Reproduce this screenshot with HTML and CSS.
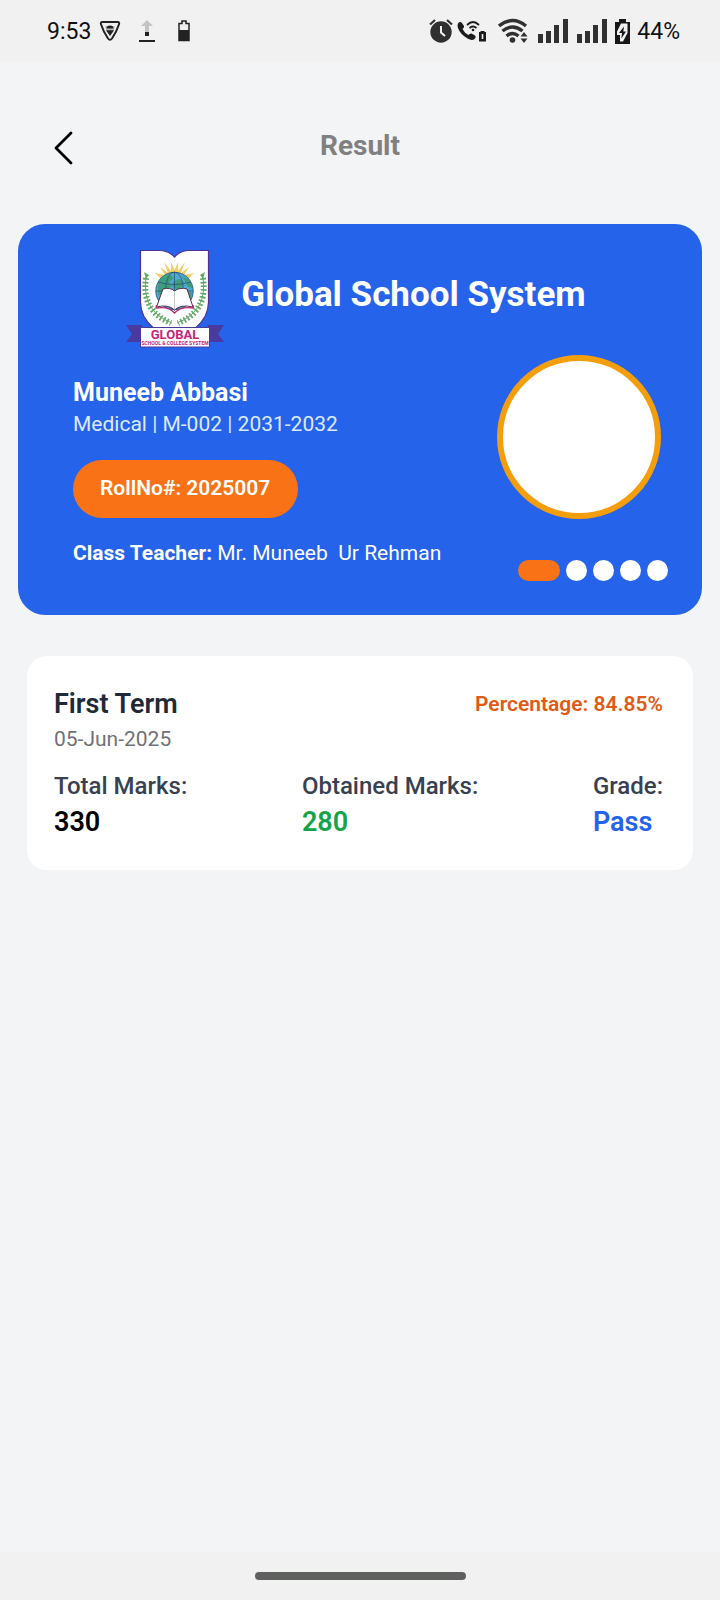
FILE: index.html
```
<!DOCTYPE html>
<html lang="en">
<head>
    <meta charset="UTF-8">
    <meta name="viewport" content="width=device-width, initial-scale=1.0">
    <title>Result - Global School System</title>
    <link rel="stylesheet" href="styles.css">
</head>
<body>
    <div class="status-bar">
        <div class="status-left">
            <span class="clock">9:53</span>
            <svg class="icon-shield" width="22" height="22" viewBox="0 0 22 22">
                <path d="M3.500 2h15q2.300 0 1.500 2.200Q17.500 12 13 18.500q-2 2.500-4 0Q4.500 12 2 4.200 1.200 2 3.500 2z" fill="none" stroke="#222" stroke-width="2"/>
                <path d="M6 6h10l-1.500 5-3.500 5-3.500-5z" fill="#bbb"/>
                <path d="M7.500 8.500q0-3 3.500-3t3.500 3zM7 10.300h8L11 16z" fill="#222"/>
            </svg>
            <svg class="icon-upload" width="18" height="22" viewBox="0 0 18 22">
                <path d="M9 0l6 6h-4v6H7V6H3z" fill="#c4c4c4"/>
                <path d="M7 12h4v4H7zM1 20h16v2H1z" fill="#222"/>
            </svg>
            <svg class="icon-battery" width="12" height="22" viewBox="0 0 12 22">
                <path d="M1 3.500h3V1h4v2.500h3V20.500H1z" fill="none" stroke="#222" stroke-width="1.500"/>
                <path d="M1 10h10v11H1z" fill="#222"/>
            </svg>
        </div>
        <div class="status-right">
            <svg width="24" height="24" viewBox="0 0 24 24">
                <circle cx="12" cy="13" r="10.700" fill="#303030"/>
                <path d="M1 5.500L6 1M23 5.500L18 1" stroke="#303030" stroke-width="2.200"/>
                <path d="M12 7v6.500l4 3.500" fill="none" stroke="#f1f1f1" stroke-width="2"/>
            </svg>
            <svg class="icon-call" width="30" height="22" viewBox="0 0 30 22">
                <path d="M1 3.500Q3 1 5 3l2 3q.6 1.500-1.500 3 2 4 6 6 1.500-2 3-1.500l3.500 2q1.500 1.500-.5 3.500-2.500 2-7-.5Q3 14 .8 7.500.2 5 1 3.500z" fill="#1c1c1c"/>
                <path d="M10 5q6-6 12 0M12.500 8q3.500-3 7 0" fill="none" stroke="#1c1c1c" stroke-width="1.800"/>
                <circle cx="16" cy="10" r="1.300" fill="#1c1c1c"/>
                <path d="M22 12h1.500v-1h4v1H29v9.500h-7z" fill="#1c1c1c"/>
                <path d="M25.500 14v5" stroke="#eee" stroke-width="1.600"/>
            </svg>
            <svg class="icon-wifi" width="31" height="26" viewBox="0 0 31 26">
                <path d="M1 8q13.500-11 27 0M4.500 13q10-8 20 0M8.500 18q6-5 12 0" fill="none" stroke="#303030" stroke-width="3.400"/>
                <circle cx="14.500" cy="22" r="2.800" fill="#303030"/>
                <path d="M20 19.500L26 12l6 8-6 7z" fill="#f1f1f1"/>
                <path d="M22.500 18.500L26 14l3.500 4.500zM22.500 20.500h7L26 25z" fill="#303030"/>
            </svg>
            <svg class="icon-signal" width="30" height="24" viewBox="0 0 30 24">
                <path d="M0 15h5v9H0zM8 12h5v12H8zM16 6h5v18h-5zM25 0h5v24h-5z" fill="#303030"/>
            </svg>
            <svg class="icon-signal" width="30" height="24" viewBox="0 0 30 24">
                <path d="M0 15h5v9H0zM8 12h5v12H8zM16 6h5v18h-5zM25 0h5v24h-5z" fill="#303030"/>
            </svg>
            <svg class="icon-charging" width="15" height="25" viewBox="0 0 15 25">
                <path d="M0 3h4V0h7v3h4v22H0z" fill="#181818"/>
                <path d="M6 4.500h6.500V14L8 22.500H5V16H2v-3.500z" fill="#f1f1f1"/>
                <path d="M9 7.500L4 14h3l-.6 5.500L11 12.500H8.300z" fill="#181818"/>
            </svg>
            <span class="percent">44%</span>
        </div>
    </div>

    <header class="top-bar">
        <button class="back-btn" type="button" aria-label="Back">
            <svg width="20" height="34" viewBox="0 0 20 34">
                <path d="M17 2L2 17l15 15" fill="none" stroke="#000" stroke-width="2.800" stroke-linecap="round" stroke-linejoin="round"/>
            </svg>
        </button>
        <h1>Result</h1>
    </header>

    <main>
        <section class="student-card">
            <div class="school">
                <svg class="school-logo" width="100" height="100" viewBox="10 8 100 100">
                    <!-- shield -->
                    <path d="M25.500 10.500h20Q54 11 59.500 17 65 11 73 10.500h20.500V62q0 15-13 26h-42q-13-11-13-26z" fill="#fff" stroke="#4a3596" stroke-width="1.200"/>
                    <!-- sun rays -->
                    <path d="M40 33l10 2-5-8 8 6-4-11 7 9 0-9 3.500 8L63 22l0 9 7-9-4 11 8-6-5 8 10-2-8 8H48z" fill="#f4cf63"/>
                    <!-- globe -->
                    <circle cx="59.500" cy="51" r="19" fill="#4fa9cf"/>
                    <path d="M43 44q3-7 11-10l5 4-5 4 3 4-6 5-3 7-5-4zM58 42l6-3 5 3-2 5-5 3-5-4zM67 36l7 4 4 8-5-1zM71 50l6 3-2 8-5-3z" fill="#3f9c7c"/>
                    <g fill="none" stroke="#254a73" stroke-width="0.700">
                        <circle cx="59.500" cy="51" r="18.700"/>
                        <ellipse cx="59.500" cy="51" rx="9" ry="19"/>
                        <path d="M59.500 32v24M43 42q16 5 33 0M41 51h37"/>
                    </g>
                    <!-- open book -->
                    <path d="M48 49q7-2 11.500 2 5-4 12.500-2l6 18q-12-3-18.500 3-6-6-18-3z" fill="#fff" stroke="#55304f" stroke-width="1"/>
                    <path d="M41.500 65l-.5 3q13-2 18.500 5 6-7 19-5l-.5-3" fill="none" stroke="#b82c6b" stroke-width="1.300"/>
                    <path d="M59.500 51v19" stroke="#aaa" stroke-width="0.700"/>
                    <!-- laurel -->
                    <g fill="none" stroke="#62a865">
                        <path d="M31 37q-5 34 26 46M88 37q5 34-26 46" stroke-width="1"/>
                        <path d="M31 38q-5 33 25 45M88 38q5 33-25 45" stroke-width="6" stroke-dasharray="1.700 2"/>
                    </g>
                    <path d="M29 32l5 3-3 4zM90 32l-5 3 3 4z" fill="#62a865"/>
                    <!-- ribbon -->
                    <path d="M11 85h16v17H11l6-8zM109 85H93v17h16l-6-8z" fill="#4b3a9e"/>
                    <path d="M25.500 87.500h69V107h-69z" fill="#fff" stroke="#4b3a9e" stroke-width="1"/>
                    <text class="logo-name" x="60" y="99" text-anchor="middle">GLOBAL</text>
                    <text class="logo-sub" x="60" y="105" text-anchor="middle">SCHOOL &amp; COLLEGE SYSTEM</text>
                </svg>
                <h2>Global School System</h2>
            </div>
            <div class="student">
                <div class="student-info">
                    <h3>Muneeb Abbasi</h3>
                    <p class="student-class">Medical | M-002 | 2031-2032</p>
                    <span class="roll-no">RollNo#: 2025007</span>
                    <p class="teacher"><strong>Class Teacher:</strong> Mr. Muneeb&nbsp; Ur Rehman</p>
                </div>
                <div class="student-side">
                    <div class="avatar"></div>
                    <div class="dots">
                        <span class="dot active"></span>
                        <span class="dot"></span>
                        <span class="dot"></span>
                        <span class="dot"></span>
                        <span class="dot"></span>
                    </div>
                </div>
            </div>
        </section>

        <section class="result-card">
            <div class="result-head">
                <h3>First Term</h3>
                <span class="percentage">Percentage: 84.85%</span>
            </div>
            <p class="date">05-Jun-2025</p>
            <dl class="marks">
                <div>
                    <dt>Total Marks:</dt>
                    <dd>330</dd>
                </div>
                <div>
                    <dt>Obtained Marks:</dt>
                    <dd class="green">280</dd>
                </div>
                <div>
                    <dt>Grade:</dt>
                    <dd class="blue">Pass</dd>
                </div>
            </dl>
        </section>
    </main>

    <footer class="nav-bar">
        <div class="nav-handle"></div>
    </footer>
</body>
</html>
```

FILE: styles.css
```
* {
    box-sizing: border-box;
}
body {
    font-family: Roboto, sans-serif;
    margin: 0;
    min-height: 100vh;
    display: flex;
    flex-direction: column;
    background-color: #f3f4f6;
    color: #000;
}
h1, h2, h3, p, dl, dd {
    margin: 0;
}
svg {
    display: block;
    flex-shrink: 0;
}
.status-bar {
    display: flex;
    justify-content: space-between;
    height: 62px;
    padding: 0 40px 0 47px;
    background-color: #f1f1f1;
    color: #111;
    font-size: 23px;
}
.status-left,
.status-right {
    display: flex;
    align-items: center;
}
.icon-shield {
    margin-left: 8px;
}
.icon-upload {
    margin-left: 17px;
}
.icon-battery {
    margin-left: 22px;
}
.icon-call {
    margin-left: 4px;
}
.icon-wifi {
    margin-left: 11px;
}
.icon-signal {
    margin-left: 9px;
}
.icon-charging {
    margin-left: 8px;
}
.percent {
    margin-left: 7px;
}
.top-bar {
    display: grid;
    grid-template-columns: 40px 1fr 40px;
    align-items: center;
    padding: 64px 44px 58px;
}
.top-bar h1 {
    font-size: 28px;
    line-height: 40px;
    font-weight: bold;
    color: #808080;
    text-align: center;
}
.back-btn {
    display: flex;
    justify-content: center;
    padding: 4px 0 0;
    border: none;
    background: none;
    cursor: pointer;
}
main {
    flex: 1;
}
.student-card {
    margin: 0 18px;
    padding: 24px 34px 34px 55px;
    border-radius: 27px;
    background-color: #2563eb;
    color: white;
}
.school {
    display: flex;
    justify-content: center;
    align-items: center;
    gap: 16px;
    padding-right: 30px;
}
.school h2 {
    font-size: 35px;
    line-height: 40px;
    padding-bottom: 6px;
}
.logo-name {
    font-size: 13px;
    font-weight: bold;
    fill: #c5267c;
}
.logo-sub {
    font-size: 5px;
    font-weight: bold;
    fill: #c5267c;
}
.student {
    display: flex;
    justify-content: space-between;
    margin-top: 7px;
}
.student-info {
    padding-top: 20px;
}
.student-info h3 {
    font-size: 25px;
    line-height: 36px;
}
.student-class {
    font-size: 21px;
    line-height: 27px;
    color: #dbeafe;
}
.roll-no {
    display: inline-block;
    margin-top: 22px;
    padding: 14px 28px 16px 27px;
    border-radius: 29px;
    background-color: #f97316;
    font-size: 21px;
    line-height: 28px;
    font-weight: 600;
}
.teacher {
    margin-top: 21px;
    font-size: 21px;
    line-height: 28px;
}
.student-side {
    display: flex;
    flex-direction: column;
    align-items: flex-end;
    gap: 41px;
}
.avatar {
    width: 164px;
    height: 164px;
    margin-right: 7px;
    border: 6px solid #f59e0b;
    border-radius: 50%;
    background-color: white;
}
.dots {
    display: flex;
    gap: 6px;
}
.dot {
    width: 21px;
    height: 21px;
    border-radius: 11px;
    background-color: white;
}
.dot.active {
    width: 42px;
    background-color: #f97316;
}
.result-card {
    margin: 41px 27px 0;
    padding: 28px 30px 30px 27px;
    border-radius: 20px;
    background-color: white;
}
.result-head {
    display: flex;
    justify-content: space-between;
    align-items: center;
}
.result-head h3 {
    font-size: 27px;
    line-height: 40px;
    font-weight: 600;
    color: #1f2937;
}
.percentage {
    font-size: 21px;
    font-weight: 600;
    color: #e05a14;
}
.date {
    font-size: 21px;
    line-height: 30px;
    color: #6f7278;
}
.marks {
    display: flex;
    justify-content: space-between;
    margin-top: 14px;
}
.marks dt {
    font-size: 24px;
    line-height: 36px;
    font-weight: 500;
    color: #374151;
}
.marks dd {
    font-size: 27px;
    line-height: 36px;
    font-weight: 600;
}
.marks .green {
    color: #16a34a;
}
.marks .blue {
    color: #2563eb;
}
.nav-bar {
    display: flex;
    justify-content: center;
    padding: 20px 0;
    background-color: #f1f1f1;
}
.nav-handle {
    width: 211px;
    height: 8px;
    border-radius: 4px;
    background-color: #5f615f;
}
```
